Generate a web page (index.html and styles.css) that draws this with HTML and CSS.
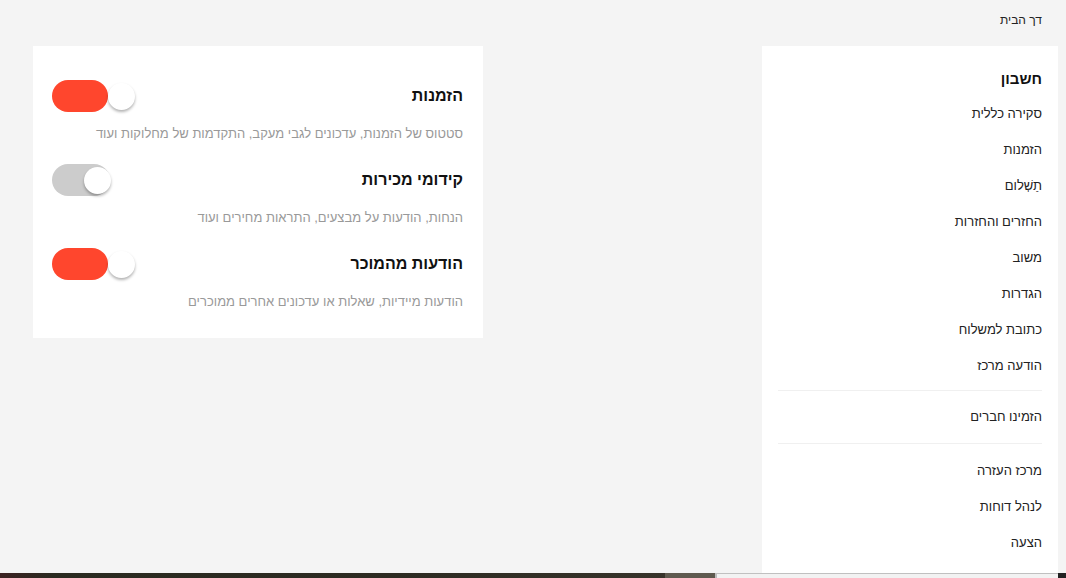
FILE: index.html
```html
<!DOCTYPE html>
<html lang="he" dir="rtl">
<head>
    <meta charset="UTF-8">
    <meta name="viewport" content="width=device-width, initial-scale=1.0">
    <title>הגדרות התראות</title>
    <link rel="stylesheet" href="styles.css">
</head>
<body>
    <div class="page">
        <div class="breadcrumb">דך הבית</div>

        <div class="layout">
            <!-- Sidebar -->
            <aside class="sidebar">
                <div class="side-title">חשבון</div>
                <a class="side-link" href="#">סקירה כללית</a>
                <a class="side-link" href="#">הזמנות</a>
                <a class="side-link" href="#">תַשְׁלום</a>
                <a class="side-link" href="#">החזרים והחזרות</a>
                <a class="side-link" href="#">משוב</a>
                <a class="side-link" href="#">הגדרות</a>
                <a class="side-link" href="#">כתובת למשלוח</a>
                <a class="side-link" href="#">הודעה מרכז</a>
                <div class="side-divider"></div>
                <a class="side-link" href="#">הזמינו חברים</a>
                <div class="side-divider"></div>
                <a class="side-link" href="#">מרכז העזרה</a>
                <a class="side-link" href="#">לנהל דוחות</a>
                <a class="side-link" href="#">הצעה</a>
            </aside>

            <!-- Notification settings -->
            <main class="main">
                <div class="card">
                    <div class="setting">
                        <div class="setting-head">
                            <h3 class="setting-title">הזמנות</h3>
                            <div class="toggle on"><span class="knob"></span></div>
                        </div>
                        <p class="setting-desc">סטטוס של הזמנות, עדכונים לגבי מעקב, התקדמות של מחלוקות ועוד</p>
                    </div>
                    <div class="setting">
                        <div class="setting-head">
                            <h3 class="setting-title">קידומי מכירות</h3>
                            <div class="toggle"><span class="knob"></span></div>
                        </div>
                        <p class="setting-desc">הנחות, הודעות על מבצעים, התראות מחירים ועוד</p>
                    </div>
                    <div class="setting">
                        <div class="setting-head">
                            <h3 class="setting-title">הודעות מהמוכר</h3>
                            <div class="toggle on"><span class="knob"></span></div>
                        </div>
                        <p class="setting-desc">הודעות מיידיות, שאלות או עדכונים אחרים ממוכרים</p>
                    </div>
                </div>
            </main>
        </div>
    </div>

    <div class="footer">
        <div class="footer-dark"></div>
        <div class="footer-mid"></div>
        <div class="footer-box"></div>
        <div class="footer-end"></div>
    </div>
</body>
</html>
```

FILE: styles.css
```css
* {
    margin: 0;
    padding: 0;
    box-sizing: border-box;
}
body {
    background: #f4f4f4;
    color: #222;
    font-family: "Liberation Sans", Arial, sans-serif;
    font-size: 13px;
    direction: rtl;
}
.page {
    padding: 0 8px;
}
.breadcrumb {
    height: 46px;
    padding: 12px 16px 0;
    font-size: 12px;
    line-height: 16px;
    color: #222;
}
.layout {
    display: flex;
    align-items: flex-start;
}
.sidebar {
    width: 296px;
    height: 527px;
    background: #fff;
    padding: 15px 0 12px;
}
.side-title {
    height: 35px;
    line-height: 36px;
    padding: 0 16px;
    font-size: 15px;
    font-weight: bold;
    color: #111;
}
.side-link {
    display: block;
    height: 36px;
    line-height: 36px;
    padding: 0 16px;
    color: #222;
    text-decoration: none;
}
.side-divider {
    height: 1px;
    margin: 6px 16px 8px;
    background: #f0f0f0;
}
.side-divider + .side-link + .side-divider {
    margin-top: 8px;
    margin-bottom: 9px;
}
.main {
    flex: 1;
    padding: 0 25px;
}
.card {
    width: 450px;
    margin-right: auto;
    background: #fff;
    padding: 33px 20px 28px 19px;
}
.setting {
    margin-bottom: 21px;
}
.setting:last-child {
    margin-bottom: 0;
}
.setting-head {
    display: flex;
    align-items: center;
    justify-content: space-between;
    height: 33px;
}
.setting-title {
    font-size: 16px;
    font-weight: bold;
    color: #111;
}
.setting-desc {
    margin-top: 14px;
    font-size: 13px;
    line-height: 16px;
    color: #999;
}
.toggle {
    position: relative;
    width: 58px;
    height: 32px;
    border-radius: 16px;
    background: #cccccc;
}
.toggle.on {
    background: #ff462d;
    width: 56px;
}
.knob {
    position: absolute;
    top: 3px;
    left: 32px;
    width: 27px;
    height: 27px;
    border-radius: 50%;
    background: #fff;
    box-shadow: 0 2px 3px rgba(0, 0, 0, 0.3);
}
.toggle.on .knob {
    left: 56px;
}
.footer {
    display: flex;
    direction: ltr;
    height: 20px;
}
.footer-dark {
    width: 665px;
    background: linear-gradient(90deg, #3c2222, #2a2a20 8%, #2d2b22 60%, #37332a);
}
.footer-mid {
    width: 50px;
    background: #5f5a4f;
}
.footer-box {
    width: 343px;
    background: #f2f2f2;
    border-top: 1px solid #c0c0c0;
    border-left: 2px solid #bdbdbd;
}
.footer-end {
    flex: 1;
    background: #222;
}
```
